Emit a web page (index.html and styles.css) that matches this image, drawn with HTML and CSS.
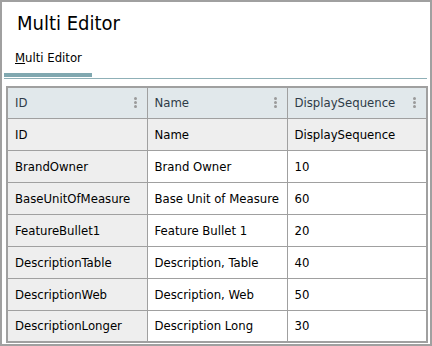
FILE: index.html
```html
<!DOCTYPE html>
<html lang="en">
<head>
  <meta charset="UTF-8" />
  <title>Multi Editor</title>
  <link rel="stylesheet" href="styles.css">
</head>
<body>
  <div class="editor">
    <div class="editor-title">Multi Editor</div>
    <div class="tabs">
      <div class="tab active"><span class="tab-key">M</span>ulti Editor</div>
    </div>
    <table class="grid">
      <thead>
        <tr class="grid-head">
          <th><div class="head-cell"><span>ID</span><span class="kebab"><i></i><i></i><i></i></span></div></th>
          <th><div class="head-cell"><span>Name</span><span class="kebab"><i></i><i></i><i></i></span></div></th>
          <th><div class="head-cell"><span>DisplaySequence</span><span class="kebab"><i></i><i></i><i></i></span></div></th>
        </tr>
        <tr class="grid-filter">
          <td>ID</td>
          <td>Name</td>
          <td>DisplaySequence</td>
        </tr>
      </thead>
      <tbody>
        <tr><td class="key">BrandOwner</td><td>Brand Owner</td><td>10</td></tr>
        <tr><td class="key">BaseUnitOfMeasure</td><td>Base Unit of Measure</td><td>60</td></tr>
        <tr><td class="key">FeatureBullet1</td><td>Feature Bullet 1</td><td>20</td></tr>
        <tr><td class="key">DescriptionTable</td><td>Description, Table</td><td>40</td></tr>
        <tr><td class="key">DescriptionWeb</td><td>Description, Web</td><td>50</td></tr>
        <tr><td class="key">DescriptionLonger</td><td>Description Long</td><td>30</td></tr>
      </tbody>
    </table>
  </div>
</body>
</html>
```

FILE: styles.css
```css
* {
  box-sizing: border-box;
  margin: 0;
  padding: 0;
}
body {
  background: #fff;
  font-family: 'DejaVu Sans Condensed', 'DejaVu Sans', sans-serif;
  color: #000;
}
.editor {
  width: 432px;
  height: 346px;
  border: 2px solid #a0a0a0;
  padding: 0 2px;
  overflow: hidden;
}
.editor-title {
  font-size: 20px;
  line-height: 24px;
  padding: 9px 0 0 13px;
  height: 40px;
}
.tabs {
  border-bottom: 1px solid #8fb0b7;
  padding-bottom: 1px;
  margin-right: 1px;
}
.tab {
  width: 88px;
  font-size: 13px;
  line-height: 16px;
  padding: 8px 0 7px 11px;
  border-bottom: 4px solid #80a8b0;
}
.tab-key {
  text-decoration: underline;
}
.grid {
  margin: 7px 0 0 2px;
  width: 422px;
  border-collapse: collapse;
  border: 2px solid #a0a0a0;
  table-layout: fixed;
  font-size: 13px;
}
.grid th,
.grid td {
  border: 1px solid #a0a0a0;
  height: 32px;
  padding: 0 0 0 7px;
  text-align: left;
  font-weight: normal;
  white-space: nowrap;
  overflow: hidden;
}
.grid th {
  height: 31px;
  background: #e1e8eb;
  color: #2e3b47;
}
.grid-filter td,
.grid td.key {
  background: #eeeeee;
}
.head-cell {
  display: flex;
  align-items: center;
  justify-content: space-between;
  padding-right: 10px;
}
.kebab {
  display: flex;
  flex-direction: column;
  gap: 1px;
}
.kebab i {
  display: block;
  width: 3px;
  height: 3px;
  border-radius: 50%;
  background: #9a9a9a;
}
```
